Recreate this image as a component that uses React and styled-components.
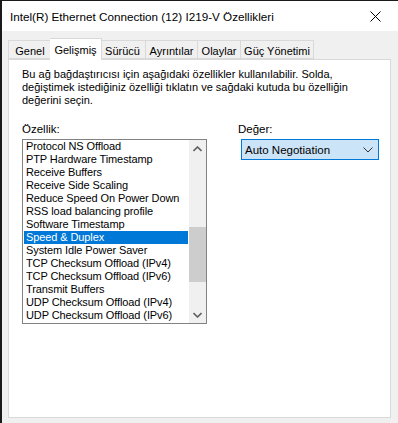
import React from "react";
import styled, { createGlobalStyle } from "styled-components";

const GlobalStyle = createGlobalStyle`
  html, body {
    margin: 0;
    padding: 0;
    background: #f0f0f0;
  }
  body {
    font-family: "Liberation Sans", Arial, sans-serif;
    font-size: 12px;
    color: #000;
  }
`;

const tabs = [
  { label: "Genel", width: 44 },
  { label: "Gelişmiş", width: 48, active: true },
  { label: "Sürücü", width: 46 },
  { label: "Ayrıntılar", width: 52 },
  { label: "Olaylar", width: 43 },
  { label: "Güç Yönetimi", width: 73 },
];

const properties = [
  "Protocol NS Offload",
  "PTP Hardware Timestamp",
  "Receive Buffers",
  "Receive Side Scaling",
  "Reduce Speed On Power Down",
  "RSS load balancing profile",
  "Software Timestamp",
  "Speed & Duplex",
  "System Idle Power Saver",
  "TCP Checksum Offload (IPv4)",
  "TCP Checksum Offload (IPv6)",
  "Transmit Buffers",
  "UDP Checksum Offload (IPv4)",
  "UDP Checksum Offload (IPv6)",
];

const selected = "Speed & Duplex";
const thumbOffset = 70;

export default function App() {
  return (
    <>
      <GlobalStyle />
      <Window>
        <TitleBar>
          <Title>Intel(R) Ethernet Connection (12) I219-V Özellikleri</Title>
          <CloseButton>
            <svg width="11" height="11" viewBox="0 0 11 11">
              <path d="M0.5 0.5 L10.5 10.5 M10.5 0.5 L0.5 10.5" stroke="#000" strokeWidth="1" fill="none" />
            </svg>
          </CloseButton>
        </TitleBar>
        <Body>
          <TabStrip>
            {tabs.map((t) => (
              <Tab key={t.label} $active={t.active} $width={t.width}>
                {t.label}
              </Tab>
            ))}
          </TabStrip>
          <Panel>
            <Description>
              Bu ağ bağdaştırıcısı için aşağıdaki özellikler kullanılabilir. Solda,
              <br />
              değiştimek istediğiniz özelliği tıklatın ve sağdaki kutuda bu özelliğin
              <br />
              değerini seçin.
            </Description>
            <Columns>
              <Column>
                <Label>Özellik:</Label>
                <ListBox>
                  <Items>
                    {properties.map((p) => (
                      <Item key={p} $selected={p === selected}>
                        {p}
                      </Item>
                    ))}
                  </Items>
                  <ScrollBar>
                    <ScrollButton>
                      <svg width="9" height="6" viewBox="0 0 9 6">
                        <path d="M0.5 5 L4.5 1 L8.5 5" stroke="#606060" strokeWidth="1.6" fill="none" />
                      </svg>
                    </ScrollButton>
                    <Track>
                      <div style={{ height: thumbOffset }} />
                      <Thumb />
                    </Track>
                    <ScrollButton>
                      <svg width="9" height="6" viewBox="0 0 9 6">
                        <path d="M0.5 1 L4.5 5 L8.5 1" stroke="#606060" strokeWidth="1.6" fill="none" />
                      </svg>
                    </ScrollButton>
                  </ScrollBar>
                </ListBox>
              </Column>
              <ValueColumn>
                <Label>Değer:</Label>
                <Combo>
                  <span>Auto Negotiation</span>
                  <svg width="10" height="6" viewBox="0 0 10 6">
                    <path d="M0.5 0.5 L5 5 L9.5 0.5" stroke="#333" strokeWidth="1" fill="none" />
                  </svg>
                </Combo>
              </ValueColumn>
            </Columns>
          </Panel>
        </Body>
      </Window>
    </>
  );
}

const Window = styled.div`
  width: 398px;
  height: 423px;
  box-sizing: border-box;
  border-top: 1px solid #1a1a1a;
  border-left: 2px solid #1a1a1a;
  display: flex;
  flex-direction: column;
  background: #f0f0f0;
`;

const TitleBar = styled.div`
  height: 30px;
  flex: none;
  background: #fff;
  display: flex;
  align-items: center;
  padding-left: 8px;
`;

const Title = styled.div`
  flex: 1;
  font-size: 11.7px;
  color: #000;
  white-space: nowrap;
`;

const CloseButton = styled.div`
  width: 46px;
  height: 30px;
  display: flex;
  align-items: center;
  justify-content: center;
`;

const Body = styled.div`
  flex: 1;
  display: flex;
  flex-direction: column;
  padding: 7px 7px 5px 6px;
`;

const TabStrip = styled.div`
  display: flex;
  align-items: flex-end;
  height: 21px;
  position: relative;
  z-index: 1;
`;

const Tab = styled.div`
  box-sizing: border-box;
  flex: none;
  width: ${(p) => p.$width + (p.$active ? 4 : 0)}px;
  height: ${(p) => (p.$active ? 22 : 19)}px;
  margin: ${(p) => (p.$active ? "0 -2px -1px" : "0")};
  border: 1px solid #d9d9d9;
  border-bottom: ${(p) => (p.$active ? "none" : "1px solid #d9d9d9")};
  background: ${(p) => (p.$active ? "#fff" : "#f0f0f0")};
  position: relative;
  z-index: ${(p) => (p.$active ? 2 : 1)};
  display: flex;
  align-items: center;
  justify-content: center;
  padding-top: ${(p) => (p.$active ? 0 : 2)}px;
  font-size: 11px;
  white-space: nowrap;
  & + & {
    border-left: ${(p) => (p.$active ? "1px solid #d9d9d9" : "none")};
  }
`;

const Panel = styled.div`
  flex: 1;
  background: #fff;
  border: 1px solid #d9d9d9;
  padding: 8px 13px 0 13px;
`;

const Description = styled.p`
  margin: 0;
  font-size: 11px;
  line-height: 13px;
  white-space: nowrap;
`;

const Columns = styled.div`
  display: grid;
  grid-template-columns: 185px 138px;
  column-gap: 31px;
  margin-top: 15px;
`;

const Column = styled.div`
  display: flex;
  flex-direction: column;
`;

const ValueColumn = styled(Column)`
  align-items: flex-start;
`;

const Label = styled.div`
  font-size: 11.5px;
  height: 14px;
  line-height: 14px;
  margin-bottom: 3px;
`;

const ListBox = styled.div`
  box-sizing: border-box;
  width: 185px;
  height: 185px;
  border: 1px solid #828282;
  display: flex;
  background: #fff;
`;

const Items = styled.div`
  flex: 1;
  padding: 0 1px;
`;

const Item = styled.div`
  height: 13px;
  line-height: 13px;
  font-size: 11px;
  padding-left: 2px;
  white-space: nowrap;
  letter-spacing: -0.1px;
  background: ${(p) => (p.$selected ? "#0078d7" : "transparent")};
  color: ${(p) => (p.$selected ? "#fff" : "#000")};
`;

const ScrollBar = styled.div`
  width: 17px;
  display: flex;
  flex-direction: column;
  background: #f0f0f0;
`;

const ScrollButton = styled.div`
  height: 17px;
  display: flex;
  align-items: center;
  justify-content: center;
`;

const Track = styled.div`
  flex: 1;
  display: flex;
  flex-direction: column;
`;

const Thumb = styled.div`
  height: 55px;
  background: #cdcdcd;
`;

const Combo = styled.div`
  box-sizing: border-box;
  width: 138px;
  height: 21px;
  margin-left: 3px;
  border: 1px solid #0078d7;
  background: #cce4f7;
  display: flex;
  align-items: center;
  justify-content: space-between;
  padding: 0 5px 0 3px;
  font-size: 11.5px;
`;
